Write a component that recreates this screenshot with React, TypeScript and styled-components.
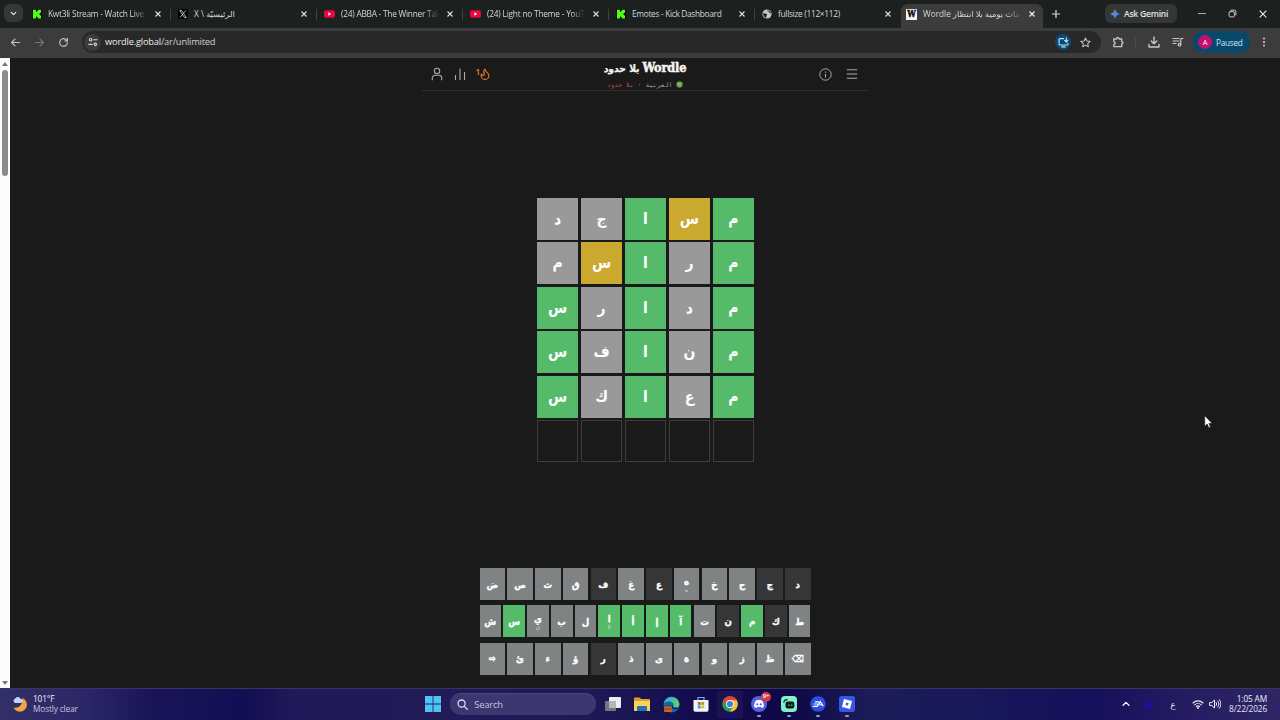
import React from "react";
import styled, { createGlobalStyle } from "styled-components";

const ui = `"Open Sans", "Noto Sans", "DejaVu Sans", sans-serif`;
const arabic = `"DejaVu Sans", sans-serif`;

const Global = createGlobalStyle`
  html, body { margin: 0; padding: 0; background: #1a1a1a; overflow: hidden; }
  * { box-sizing: border-box; }
`;

const Screen = styled.div`
  width: 1280px;
  height: 720px;
  display: flex;
  flex-direction: column;
  position: relative;
  overflow: hidden;
  font-family: ${ui};
  color: #e3e3e3;
  background: #1a1a1a;
`;

const TabStrip = styled.header`
  height: 28px;
  display: flex;
  background: #1c201f;
`;
const TabSearch = styled.div`
  width: 25px;
  flex: none;
  padding: 4px 0 0 4px;
`;
const TabSearchButton = styled.div`
  width: 19px;
  height: 18px;
  border-radius: 6px;
  background: #353837;
  display: flex;
  align-items: center;
  justify-content: center;
`;
const TabBox = styled.div<{ $active?: boolean; $divider?: boolean; $w: number }>`
  width: ${(p) => p.$w}px;
  flex: none;
  height: ${(p) => (p.$active ? 24 : 20)}px;
  margin-top: 4px;
  padding: 0 ${(p) => (p.$active ? 8 : 10)}px ${(p) => (p.$active ? 4 : 0)}px ${(p) => (p.$active ? 5 : 7)}px;
  display: flex;
  align-items: center;
  gap: 5px;
  border-radius: 7px 7px 0 0;
  background: ${(p) => (p.$active ? "#3c3c3c" : "transparent")};
  background-image: ${(p) => (p.$divider ? "linear-gradient(#414443,#414443)" : "none")};
  background-size: 1px 12px;
  background-position: right center;
  background-repeat: no-repeat;
`;
const TabTitle = styled.div<{ $ls?: number; $fade?: boolean }>`
  flex: 1;
  min-width: 0;
  overflow: hidden;
  white-space: nowrap;
  font-size: 8.3px;
  line-height: 16px;
  letter-spacing: ${(p) => p.$ls ?? 0}px;
  padding-left: 1px;
  color: #d6d8d7;
  mask-image: ${(p) => (p.$fade ? "linear-gradient(90deg,#000 86%,transparent 100%)" : "none")};
  margin-right: 3px;
`;
const Icon = styled.svg`
  flex: none;
  display: block;
`;
const NewTab = styled.div`
  width: 26px;
  flex: none;
  height: 27px;
  display: flex;
  align-items: center;
  justify-content: center;
`;
const Gemini = styled.div`
  width: 72px;
  flex: none;
  height: 19px;
  margin: 4px 0 0 36px;
  padding-left: 5px;
  border-radius: 6px;
  background: #343736;
  display: flex;
  align-items: center;
  gap: 4px;
  font-size: 8.6px;
  font-weight: 600;
  letter-spacing: -0.25px;
  white-space: nowrap;
`;
const WindowButtons = styled.div`
  flex: 1;
  min-width: 0;
  height: 27px;
  margin-left: 6px;
  display: flex;
  align-items: center;
`;
const Divider = styled.div`
  width: 1px;
  height: 11px;
  background: #484a4a;
`;
const Slot = styled.div<{ $w: number }>`
  width: ${(p) => p.$w}px;
  flex: none;
  display: flex;
  align-items: center;
  justify-content: center;
`;

const Toolbar = styled.div`
  height: 30px;
  padding: 0 3px 2px;
  background: #3c3c3c;
  display: flex;
  align-items: center;
`;
const Omnibox = styled.div`
  width: 1019px;
  height: 22px;
  flex: none;
  margin-left: 7px;
  padding: 0 2px;
  border-radius: 11px;
  background: #282828;
  display: flex;
  align-items: center;
`;
const Round = styled.div<{ $bg: string; $d: number }>`
  width: ${(p) => p.$d}px;
  height: ${(p) => p.$d}px;
  flex: none;
  border-radius: 50%;
  background: ${(p) => p.$bg};
  display: flex;
  align-items: center;
  justify-content: center;
`;
const Url = styled.div`
  flex: 1;
  margin-left: 4px;
  font-size: 9.3px;
  line-height: 20px;
  letter-spacing: -0.2px;
  color: #cfcfcf;
  span { color: #ececec; }
`;
const Profile = styled.div`
  width: 57px;
  height: 22px;
  flex: none;
  margin-left: 8px;
  padding-left: 5px;
  border-radius: 11px;
  background: #08486b;
  display: flex;
  align-items: center;
  gap: 4px;
  font-size: 8.2px;
  font-weight: 500;
  letter-spacing: -0.25px;
  color: #c9e8fb;
`;
const Initial = styled.span`
  font-size: 7.5px;
  color: #fff;
`;

const Body = styled.div`
  height: 630px;
  display: flex;
`;
const ScrollTrack = styled.div`
  width: 10px;
  background: #fcfcfc;
  display: flex;
  flex-direction: column;
  align-items: center;
  padding: 4px 0 3px;
`;
const ScrollThumb = styled.div`
  width: 6px;
  height: 106px;
  margin: 4px 0 auto;
  border-radius: 3px;
  background: #8b8b8b;
`;
const Page = styled.main`
  flex: 1;
  background: #1a1a1a;
  display: flex;
  flex-direction: column;
  align-items: center;
`;
const GameHeader = styled.div`
  width: 447px;
  height: 33px;
  border-bottom: 1px solid #302e2c;
  display: flex;
  align-items: center;
`;
const HeaderSide = styled.div<{ $end?: boolean }>`
  width: 120px;
  height: 32px;
  padding: ${(p) => (p.$end ? "0 11px 0 0" : "0 0 0 8px")};
  display: flex;
  align-items: center;
  justify-content: ${(p) => (p.$end ? "flex-end" : "flex-start")};
  gap: ${(p) => (p.$end ? 14 : 10)}px;
  color: #a9a9a9;
`;
const Streak = styled.div`
  display: flex;
  align-items: center;
  color: #d5742c;
  font: 700 8px/10px ${ui};
  span { margin-top: -5px; }
`;
const HeaderTitle = styled.div`
  flex: 1;
  height: 33px;
  display: flex;
  flex-direction: column;
  align-items: center;
`;
const Title = styled.h1`
  margin: 0;
  direction: rtl;
  display: flex;
  align-items: baseline;
  gap: 3px;
  white-space: nowrap;
  font: 700 10.2px/18px "DejaVu Sans Condensed", ${arabic};
  color: #f6f5f1;
  -webkit-text-stroke: 0.25px #f6f5f1;
`;
const Brand = styled.span`
  font: 700 12.6px/19px "DejaVu Serif Condensed", "DejaVu Serif", serif;
  letter-spacing: -0.15px;
  -webkit-text-stroke: 0.5px #f6f5f1;
`;
const Subtitle = styled.div`
  direction: rtl;
  display: flex;
  align-items: center;
  gap: 4px;
  margin-top: 2px;
  font: 6.4px/10px "DejaVu Sans Mono", monospace;
  white-space: nowrap;
  color: #a5a29e;
`;
const Mode = styled.span`
  color: #b25145;
`;

const Board = styled.div`
  width: 217px;
  height: 264px;
  margin: 107px 0 0 1px;
  display: grid;
  grid-template-columns: repeat(5, 1fr);
  grid-template-rows: repeat(6, 1fr);
  gap: 2.6px;
`;
type State = "hit" | "near" | "miss" | "none" | "idle" | "used";
const fill: Record<State, string> = {
  hit: "#55bb6b",
  near: "#cba92e",
  miss: "#999999",
  none: "transparent",
  idle: "#7f8384",
  used: "#363638",
};
const Tile = styled.div<{ $s: State }>`
  background: ${(p) => fill[p.$s]};
  border: ${(p) => (p.$s === "none" ? "1px solid #403d38" : "none")};
  display: flex;
  align-items: center;
  justify-content: center;
  font: 700 15.5px/20px "DejaVu Sans Condensed", ${arabic};
  color: #fff;
`;
const Keyboard = styled.div`
  width: 331px;
  margin-top: 106px;
  display: flex;
  flex-direction: column;
  gap: 5.3px;
`;
const KeyRow = styled.div`
  height: 32px;
  display: flex;
  gap: 2.2px;
`;
const Key = styled.div<{ $s: State }>`
  flex: 1 1 0;
  min-width: 0;
  background: ${(p) => fill[p.$s]};
  display: flex;
  flex-direction: column;
  align-items: center;
  justify-content: center;
  font: 700 9.6px/11px "DejaVu Sans Condensed", ${arabic};
  -webkit-text-stroke: 0.3px #fff;
  color: #fff;
`;
const Hint = styled.small`
  font: 400 6px/6px ${arabic};
  -webkit-text-stroke: 0;
  opacity: 0.6;
`;

const Taskbar = styled.footer`
  height: 32px;
  padding-bottom: 1px;
  border-top: 1px solid #3a3560;
  display: flex;
  align-items: center;
  background: linear-gradient(90deg, #332f68 0, #2c2768 85px, #1a1558 150px, #110e53 245px, #201858 290px, #211b58 430px, #1f1856 600px, #120c4e 700px, #0e0846 790px, #1b1c58 870px, #19195a 960px, #15105a 1090px, #261c62 1190px, #2e2665 1280px);
`;
const Weather = styled.div`
  width: 418px;
  padding-left: 12px;
  display: flex;
  align-items: center;
  gap: 5px;
`;
const Lines = styled.div<{ $right?: boolean }>`
  font-size: 8.3px;
  line-height: 10.5px;
  letter-spacing: -0.15px;
  color: ${(p) => (p.$right ? "#e6e4f2" : "#c8c5dd")};
  white-space: nowrap;
  text-align: ${(p) => (p.$right ? "right" : "left")};
  div:first-child { color: #efeff8; }
`;
const Search = styled.div`
  width: 146px;
  height: 22px;
  margin: 0 2px 0 3px;
  padding-left: 7px;
  border-radius: 11px;
  background: #3d3670;
  border-top: 1px solid #4c4580;
  display: flex;
  align-items: center;
  gap: 6px;
  font-size: 9.4px;
  letter-spacing: -0.2px;
  color: #c6c3de;
`;
const TaskItem = styled.div<{ $mark?: "dot" | "line" }>`
  width: 29.3px;
  height: 30px;
  flex: none;
  display: flex;
  align-items: center;
  justify-content: center;
  position: relative;
  background: ${(p) => (p.$mark === "line" ? "linear-gradient(#1a1350,#1a1350) center / 26px 27px no-repeat" : "none")};
  &::after {
    content: "";
    position: absolute;
    bottom: 2px;
    left: 50%;
    width: ${(p) => (p.$mark === "line" ? 10 : p.$mark ? 4 : 0)}px;
    height: 2px;
    margin-left: ${(p) => (p.$mark === "line" ? -5 : -2)}px;
    border-radius: 1px;
    background: ${(p) => (p.$mark === "line" ? "#0e0a9a" : "#9c99b8")};
  }
`;
const Badge = styled.div`
  position: absolute;
  right: 3px;
  top: 3px;
  width: 10px;
  height: 10px;
  border-radius: 5px;
  background: #cf3a4b;
  color: #fff;
  font-size: 6px;
  line-height: 9.5px;
  font-weight: 600;
  text-align: center;
`;
const Tray = styled.div`
  flex: 1;
  padding-right: 13px;
  display: flex;
  align-items: center;
  justify-content: flex-end;
`;
const Lang = styled.div`
  width: 26px;
  text-align: center;
  font: 9px/12px ${arabic};
  color: #dedcec;
  margin-top: 2px;
`;
const Pointer = styled.svg`
  position: absolute;
  left: 1204px;
  top: 415px;
`;

const Kick = () => (
  <Icon width="10" height="10" viewBox="0 0 10 10">
    <rect width="10" height="10" fill="#0a0f08" />
    <path d="M1 .8h3v2h1V1.8h1v-1h3v3H8v1H7v.6h1v1h1v3H6v-1H5v-1H4v2H1z" fill="#53fc18" />
  </Icon>
);
const XLogo = () => (
  <Icon width="10" height="10" viewBox="0 0 10 10">
    <rect width="10" height="10" rx="1" fill="#000" />
    <path d="M1.7 1.400h1.800l4.800 7.200H6.500zM8 1.300 5.400 4.400M4.500 5.500 1.900 8.600" fill="none" stroke="#e8e8e8" strokeWidth=".75" />
  </Icon>
);
const YouTube = () => (
  <Icon width="11" height="10" viewBox="0 0 11 10">
    <rect y="1.200" width="11" height="7.600" rx="2" fill="#e8083a" />
    <path d="M4.300 3.300v3.400L7.300 5z" fill="#fff" />
  </Icon>
);
const GlobeIcon = () => (
  <Icon width="10" height="10" viewBox="0 0 10 10">
    <circle cx="5" cy="5" r="4.600" fill="#c4c7c6" />
    <path d="M1.200 3.900c1 .1 2.400 1 3.300.9.8-.1.6 1.200 0 1.600-.5.500.2 1.500-.6 2.300C2 8 1 6 1.200 3.900zM5.600 1.200c-.6.8.200 1.300 1 1.400.9.200.3 1.300 1.200 1.500l1.100.4c-.2-1.800-1.400-3-3.300-3.300z" fill="#1c201f" />
  </Icon>
);
const WBox = styled.div`
  width: 11px;
  height: 11px;
  flex: none;
  background: #f4f4f4;
  color: #111;
  display: flex;
  justify-content: center;
  font: 700 8.5px/11px "DejaVu Serif Condensed", "DejaVu Serif", serif;
  -webkit-text-stroke: 0.4px #111;
`;
const Cross = ({ s = 6, c = "#dadcdb" }: { s?: number; c?: string }) => (
  <Icon width={s} height={s} viewBox="0 0 6 6">
    <path d="M.5.5l5 5M5.500.5l-5 5" stroke={c} strokeWidth={7 / s} />
  </Icon>
);
const Plus = () => (
  <Icon width="8" height="8"><path d="M4 0v8M0 4h8" stroke="#dcdedd" strokeWidth="1.200" /></Icon>
);

const Line = ({ d, s = 12, w = 1.2, c = "#c7c7c7", children }: { d?: string; s?: number; w?: number; c?: string; children?: React.ReactNode }) => (
  <Icon width={s} height={s} viewBox="0 0 12 12" fill="none" stroke={c} strokeWidth={w} strokeLinecap="round" strokeLinejoin="round">
    {d && <path d={d} />}
    {children}
  </Icon>
);

const tabs = [
  { icon: <Kick />, title: "Kwt3li Stream - Watch Live", fade: true, ls: -0.24 },
  { icon: <XLogo />, title: "X \\ الرئيسيّة", ls: 0 },
  { icon: <YouTube />, title: "(24) ABBA - The Winner Tak", fade: true, ls: -0.23 },
  { icon: <YouTube />, title: "(24) Light no Theme - YouT", fade: true, ls: -0.2 },
  { icon: <Kick />, title: "Emotes - Kick Dashboard", ls: -0.3 },
  { icon: <GlobeIcon />, title: "fullsize (112×112)", ls: -0.28 },
];

const g: State = "hit", y: State = "near", m: State = "miss";
const guesses: [string, State][][] = [
  [["د", m], ["ج", m], ["ا", g], ["س", y], ["م", g]],
  [["م", m], ["س", y], ["ا", g], ["ر", m], ["م", g]],
  [["س", g], ["ر", m], ["ا", g], ["د", m], ["م", g]],
  [["س", g], ["ف", m], ["ا", g], ["ن", m], ["م", g]],
  [["س", g], ["ك", m], ["ا", g], ["ع", m], ["م", g]],
  [["", "none"], ["", "none"], ["", "none"], ["", "none"], ["", "none"]],
];

const keyRows = ["ض ص ث ق ف غ ع ه خ ح ج د", "ش س ي ب ل ا أ إ آ ت ن م ك ط", "⇨ ئ ء ؤ ر ذ ى ة و ز ظ ⌫"].map((r) => r.split(" "));
const hits = "سمااأإآ";
const used = "فعجدنكر";
const hints: Record<string, string> = { "ه": "ة", "ي": "ى", "ا": "لا" };
const keyState = (k: string): State => (hits.includes(k) ? "hit" : used.includes(k) ? "used" : "idle");

export default function App() {
  return (
    <>
      <Global />
      <Screen>
        <TabStrip>
          <TabSearch>
            <TabSearchButton><Line s={9} w={1.8} d="M3 4.500l3 3 3-3" c="#e3e3e3" /></TabSearchButton>
          </TabSearch>
          {tabs.map((t, i) => (
            <TabBox key={i} $w={146} $divider={i < 5}>
              {t.icon}
              <TabTitle $fade={t.fade} $ls={t.ls}>{t.title}</TabTitle>
              <Cross />
            </TabBox>
          ))}
          <TabBox $active $w={142}>
            <WBox>W</WBox>
            <TabTitle $fade>Wordle مات يومية بلا انتظار</TabTitle>
            <Cross c="#f0f0f0" />
          </TabBox>
          <NewTab><Plus /></NewTab>
          <Gemini>
            <Icon width="10" height="10" viewBox="0 0 10 10">
              <defs>
                <linearGradient id="gem" x1="0" y1="0" x2="1" y2="0.6">
                  <stop offset="0" stopColor="#e9b53c" /><stop offset=".3" stopColor="#59a869" /><stop offset=".5" stopColor="#4a8df6" /><stop offset="1" stopColor="#3c7cf0" />
                </linearGradient>
              </defs>
              <path d="M5 0C5.700 2.800 7.200 4.300 10 5 7.200 5.700 5.700 7.200 5 10 4.300 7.200 2.800 5.700 0 5 2.800 4.300 4.300 2.800 5 0z" fill="url(#gem)" />
              <path d="M5 0C5.500 2 6 3 7 3.800L3.500 3.300C4.300 2.500 4.700 1.300 5 0z" fill="#dc5548" />
            </Icon>
            Ask Gemini
          </Gemini>
          <WindowButtons>
            <Divider />
            <Slot $w={38}><Icon width="8" height="2"><path d="M0 .5h8" stroke="#aaadac" /></Icon></Slot>
            <Slot $w={23}>
              <Line s={9} w={1.3} c="#d0d2d1"><rect x="1.500" y="3.500" width="7" height="7" rx="1.500" /><path d="M4 1.500h4.500a2 2 0 0 1 2 2V8" /></Line>
            </Slot>
            <Slot $w={38}><Cross s={8} c="#e6e6e6" /></Slot>
          </WindowButtons>
        </TabStrip>

        <Toolbar>
          <Slot $w={24}><Line d="M10.500 6H2M5.500 2.200 1.700 6l3.800 3.800" s={11} /></Slot>
          <Slot $w={24}><Line d="M1.500 6H10M6.500 2.200 10.300 6 6.500 9.800" s={11} c="#777" /></Slot>
          <Slot $w={24}><Line d="M10.200 6A4.200 4.200 0 1 1 8.800 2.900L10.200 4.200M10.300 1.300v3H7.400" s={11} /></Slot>
          <Omnibox>
            <Round $bg="#3c3c3c" $d={17}>
              <Line s={10} w={1.3} c="#d8d8d8"><circle cx="3.200" cy="3.200" r="1.500" /><path d="M6.800 3.200h4M1 8.800h4" /><circle cx="8.800" cy="8.800" r="1.500" /></Line>
            </Round>
            <Url><span>wordle.global</span>/ar/unlimited</Url>
            <Round $bg="#0a4a72" $d={16}>
              <Line s={11} w={1.2} c="#c5e6fa"><path d="M6 1.800H2.200a1 1 0 0 0-1 1v5a1 1 0 0 0 1 1h7.600a1 1 0 0 0 1-1V7M4 10.800h4M9 1v4.300M7.200 3.700 9 5.500l1.800-1.800" /></Line>
            </Round>
            <Slot $w={28}><Line s={11} w={1.1} d="M6 1l1.500 3.300 3.500.4-2.600 2.400.7 3.600L6 8.900 2.900 10.700l.7-3.600L1 4.700l3.500-.4z" /></Slot>
          </Omnibox>
          <Slot $w={34}><Line s={12} w={1.3} d="M1.800 3h2.700c0-2 2.500-2 2.500 0h2.700v2.700c1.700 0 1.700 2.300 0 2.300v2.700H1.800V8.300c1.900 0 1.900-2.600 0-2.600z" /></Slot>
          <Divider />
          <Slot $w={35}><Line s={12} w={1.4} d="M6 1v6.500M3.200 5 6 7.700 8.800 5M1 8.500v2.500h10V8.500" /></Slot>
          <Slot $w={14}><Line s={12} w={1.2}><path d="M1 2.500h6M1 5h6M1 7.500h3M8.800 8.500V2.500h2.200" /><circle cx="7.500" cy="8.700" r="1.300" /></Line></Slot>
          <Profile>
            <Round $bg="#c2106c" $d={14}><Initial>A</Initial></Round>
            Paused
          </Profile>
          <Slot $w={27}>
            <Icon width="4" height="10" fill="#d0d0d0"><circle cx="2" cy="1.500" r="1" /><circle cx="2" cy="5" r="1" /><circle cx="2" cy="8.500" r="1" /></Icon>
          </Slot>
        </Toolbar>

        <Body>
          <ScrollTrack>
            <Icon width="6" height="4"><path d="M0 4h6L3 0z" fill="#777" /></Icon>
            <ScrollThumb />
            <Icon width="6" height="4"><path d="M0 0h6L3 4z" fill="#777" /></Icon>
          </ScrollTrack>
          <Page>
            <GameHeader>
              <HeaderSide>
                <Icon width="14" height="14" viewBox="0 0 14 14" fill="none" stroke="currentColor" strokeWidth="1.100"><circle cx="7" cy="4" r="2.700" /><path d="M2.300 13.300V11a2.700 2.700 0 0 1 2.700-2.700h4A2.700 2.700 0 0 1 11.700 11v2.300" /></Icon>
                <Icon width="12" height="12" viewBox="0 0 12 12" fill="none" stroke="currentColor" strokeWidth="1.100"><path d="M1.500 7v5M6 .5V12M10.500 4v8" /></Icon>
                <Streak>
                  <span>1</span>
                  <Icon width="10" height="12" viewBox="3 1 18 22" fill="none" stroke="currentColor" strokeWidth="2.200" strokeLinejoin="round"><path d="M8.500 14.500A2.500 2.500 0 0 0 11 12c0-1.380-.5-2-1-3-1.072-2.143-.224-4.054 2-6 .5 2.500 2 4.900 4 6.500 2 1.600 3 3.500 3 5.500a7 7 0 1 1-14 0c0-1.153.433-2.294 1-3a2.500 2.500 0 0 0 2.500 2.500z" /></Icon>
                </Streak>
              </HeaderSide>
              <HeaderTitle>
                <Title><Brand>Wordle</Brand><span>بلا حدود</span></Title>
                <Subtitle>
                  <Icon width="7" height="7" viewBox="0 0 7 7"><circle cx="3.500" cy="3.500" r="3.200" fill="#5c9443" /><path d="M1.500 2.700h3.800M2 4.200h3" stroke="#b9d0a0" strokeWidth=".8" /></Icon>
                  <span>العربية</span><span>·</span><Mode>بلا حدود</Mode>
                </Subtitle>
              </HeaderTitle>
              <HeaderSide $end>
                <Icon width="13" height="13" viewBox="0 0 13 13" fill="none" stroke="currentColor"><circle cx="6.500" cy="6.500" r="5.700" /><path d="M6.500 6v3.500M6.500 3.500v1.200" strokeWidth="1.100" /></Icon>
                <Icon width="12" height="12" viewBox="0 0 12 12" stroke="currentColor" strokeWidth="1.100"><path d="M.8 1.800h10.400M.8 6h10.400M.8 10.300h10.400" /></Icon>
              </HeaderSide>
            </GameHeader>
            <Board>
              {guesses.flatMap((row, r) => row.map(([ch, s], c) => <Tile key={`${r}-${c}`} $s={s}>{ch}</Tile>))}
            </Board>
            <Keyboard>
              {keyRows.map((row, r) => (
                <KeyRow key={r}>
                  {row.map((k) => (
                    <Key key={k} $s={keyState(k)}>{k}{hints[k] && <Hint>{hints[k]}</Hint>}</Key>
                  ))}
                </KeyRow>
              ))}
            </Keyboard>
          </Page>
        </Body>

        <Taskbar>
          <Weather>
            <Icon width="16" height="17" viewBox="0 0 16 17">
              <path d="M10 2a7 7 0 1 1-8.500 9.500C7 13 11.500 8 10 2z" fill="#f0a63c" />
              <path d="M3 7a2.300 2.300 0 0 1 0-4.300A3.200 3.200 0 0 1 8.700 3 2 2 0 0 1 9 7z" fill="#c3d3fb" />
            </Icon>
            <Lines><div>101°F</div><div>Mostly clear</div></Lines>
          </Weather>
          <TaskItem>
            <Icon width="16" height="16" viewBox="0 0 16 16" fill="#4fc3f5"><path d="M0 0h7.600v7.600H0zM8.400 0H16v7.600H8.400zM0 8.400h7.600V16H0zM8.400 8.400H16V16H8.400z" /></Icon>
          </TaskItem>
          <Search>
            <Line s={11} w={1.4} c="#dcdaea"><circle cx="5" cy="5" r="3.900" /><path d="M8 8l3.200 3.200" /></Line>
            Search
          </Search>
          <TaskItem>
            <Icon width="17" height="16" viewBox="0 0 17 16"><rect x="5" y="1" width="12" height="11" rx="1" fill="#eeeef2" /><rect x="1" y="5" width="11" height="10" rx="1" fill="#77767f" /><path d="M5 5h7v7H5z" fill="#b5b5ba" /></Icon>
          </TaskItem>
          <TaskItem>
            <Icon width="16" height="15" viewBox="0 0 16 15"><path d="M0 1.500C0 .7.500.5 1 .5h4.500L7.200 2H15c.6 0 1 .4 1 1v11H0z" fill="#d9a12c" /><path d="M0 4h16v10H0z" fill="#fad35a" /><path d="M3 14v-4c0-.8.500-1 1-1h8c.5 0 1 .2 1 1v4z" fill="#1d74b8" /></Icon>
          </TaskItem>
          <TaskItem>
            <Icon width="17" height="17" viewBox="0 0 17 17">
              <defs><linearGradient id="edge" x1="0" y1="0" x2="1" y2=".4"><stop offset="0" stopColor="#2ea4e2" /><stop offset="1" stopColor="#5ed06e" /></linearGradient></defs>
              <circle cx="8.500" cy="8.500" r="8" fill="#1464b4" />
              <path d="M.6 8A8 8 0 0 1 16.500 8c0 2.500-2 3.600-4 3.600s-3-1-2-2C11.500 7 8 5 5 5.500 2.500 6 1 7 .6 8z" fill="url(#edge)" />
              <path d="M9 9.500c0 2.500 3 3.500 5.500 2.700" stroke="#181455" strokeWidth="1.300" fill="none" />
              <rect x="1" y="10.500" width="8" height="5.500" rx="1" fill="#c7691e" /><path d="M1 13h8M3.500 10.500V9.500h3v1" stroke="#6b330b" fill="none" strokeWidth=".8" />
            </Icon>
          </TaskItem>
          <TaskItem>
            <Icon width="16" height="17" viewBox="0 0 16 17"><path d="M5 4V1.500h6V4" stroke="#5fb5ee" fill="none" strokeWidth="1.200" /><path d="M.5 4h15v9.500c0 1.500-.8 2.300-2.200 2.300H2.700c-1.400 0-2.200-.8-2.200-2.300z" fill="#f3f4f8" /><path d="M4.800 6h2.900v2.900H4.800z" fill="#e8512e" /><path d="M8.300 6h2.900v2.900H8.300z" fill="#7db526" /><path d="M4.800 9.500h2.900v2.900H4.800z" fill="#279fe5" /><path d="M8.300 9.500h2.900v2.900H8.300z" fill="#f6b321" /></Icon>
          </TaskItem>
          <TaskItem $mark="line">
            <Icon width="16" height="16" viewBox="0 0 16 16"><circle cx="8" cy="8" r="7.800" fill="#2c9f50" /><path d="M8 8 1.200 4.200A7.800 7.800 0 0 1 14.800 4.200z" fill="#e34335" /><path d="M8 4.200h6.800A7.800 7.800 0 0 1 8 15.800L11.300 10z" fill="#fac32c" /><path d="M1.200 4.200 4.700 10 8 4.200z" fill="#e34335" /><circle cx="8" cy="8" r="3.900" fill="#fff" /><circle cx="8" cy="8" r="3.100" fill="#3e7df0" /></Icon>
          </TaskItem>
          <TaskItem $mark="dot">
            <Icon width="16" height="16" viewBox="0 0 16 16"><circle cx="8" cy="8" r="8" fill="#5560e8" /><path d="M5 4.500c2-.6 4-.6 6 0 1.400 2 2 4 1.900 6.200-.8.600-1.600 1-2.500 1.200l-.7-1.200c-1.100.3-2.300.3-3.400 0l-.7 1.200c-.9-.2-1.700-.6-2.500-1.200C3 8.500 3.600 6.500 5 4.500z" fill="#fff" /><circle cx="6.200" cy="8.300" r="1.100" fill="#5560e8" /><circle cx="9.800" cy="8.300" r="1.100" fill="#5560e8" /></Icon>
            <Badge>9+</Badge>
          </TaskItem>
          <TaskItem $mark="dot">
            <Icon width="16" height="16" viewBox="0 0 16 16"><rect width="16" height="16" rx="4" fill="#7ff2c8" /><path d="M2.800 6.500C3 4.500 4.500 3.600 6.500 3.600" stroke="#0a1c1c" strokeWidth="1.200" fill="none" /><rect x="4.500" y="5.500" width="8.800" height="7" rx="2.200" fill="#0a1c1c" /><path d="M8 8.500v1.500M10.800 8.500v1.500" stroke="#7ff2c8" /></Icon>
          </TaskItem>
          <TaskItem $mark="dot">
            <Icon width="16" height="16" viewBox="0 0 16 16"><circle cx="8" cy="8" r="7.800" fill="#2b50dc" /><path d="M5 5.800h4.200M3.600 8h4.200M2.800 10.300h4.400L10.300 5.600l3 4.700M9.500 8.800h2" stroke="#fff" strokeWidth="1.200" fill="none" /></Icon>
          </TaskItem>
          <TaskItem $mark="dot">
            <Icon width="16" height="16" viewBox="0 0 16 16"><rect width="16" height="16" rx="2.500" fill="#3457e6" /><path d="M4.900 3 13 5.100 11 13 3 10.900z" fill="#fff" /><path d="M7.100 6.600l2.500.6-.7 2.400-2.400-.6z" fill="#3457e6" /></Icon>
          </TaskItem>
          <Tray>
            <Slot $w={20}><Line s={10} w={1.5} c="#fff" d="M2.500 7.500 6 4l3.500 3.500" /></Slot>
            <Slot $w={24}><Line s={11} w={1.5} c="#1d10b4" d="M4.500 2.500a1.500 1.500 0 0 1 3 0v3.500a1.500 1.500 0 0 1-3 0zM2.500 6a3.500 3.500 0 0 0 7 0M6 9.500v2" /></Slot>
            <Lang>ع</Lang>
            <Slot $w={24}><Line s={12} w={1.1} c="#eeeef6"><path d="M1 5a7 7 0 0 1 10 0M2.700 6.900a4.700 4.700 0 0 1 6.600 0M4.400 8.600a2.200 2.200 0 0 1 3.200 0" /><circle cx="6" cy="10" r=".4" /></Line></Slot>
            <Slot $w={9}><Line s={12} w={1} c="#eeeef6" d="M1 4.500h1.800L5.500 2v8L2.800 7.500H1zM7.200 4.500a2.200 2.200 0 0 1 0 3M8.800 3a4.300 4.300 0 0 1 0 6M10.400 1.800a6 6 0 0 1 0 8.400" /></Slot>
            <Slot $w={10} />
            <Lines $right><div>1:05 AM</div><div>8/22/2026</div></Lines>
          </Tray>
        </Taskbar>

        <Pointer width="9" height="14" viewBox="0 0 9 14"><path d="M.7.7v10.600l2.500-2.300 1.600 3.800 1.700-.8-1.600-3.600h3.300z" fill="#fff" stroke="#222" strokeWidth=".7" /></Pointer>
      </Screen>
    </>
  );
}
